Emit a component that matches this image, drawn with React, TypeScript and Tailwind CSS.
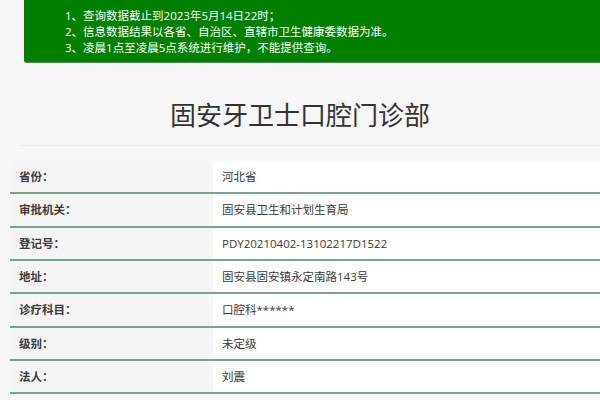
import React from 'react';

const notices = [
  '1、查询数据截止到2023年5月14日22时；',
  '2、信息数据结果以各省、自治区、直辖市卫生健康委数据为准。',
  '3、凌晨1点至凌晨5点系统进行维护，不能提供查询。',
];

const rows = [
  { label: '省份：', value: '河北省' },
  { label: '审批机关：', value: '固安县卫生和计划生育局' },
  { label: '登记号：', value: 'PDY20210402-13102217D1522' },
  { label: '地址：', value: '固安县固安镇永定南路143号' },
  { label: '诊疗科目：', value: '口腔科******' },
  { label: '级别：', value: '未定级' },
  { label: '法人：', value: '刘震' },
];

const App = () => {
  return (
    <div className="w-full h-[400px] overflow-hidden bg-[#f7f7f7] font-['Open_Sans','Noto_Sans_CJK_SC',sans-serif] text-[#333]">
      <div className="ml-[24px] h-[63px] bg-[#008000] rounded-bl-[3px] border-b border-[#3d9b3d] pl-[41px] pt-[8px] text-white text-[11.5px] leading-[16px]">
        {notices.map((n, i) => (
          <p key={i}>{n}</p>
        ))}
      </div>

      <div className="pt-[33px] pb-[13px] ml-[20px] border-b border-[#ececec]">
        <h1 className="text-center text-[26px] leading-[36px] font-normal text-[#333] -ml-[20px] font-['Noto_Sans_CJK_SC',sans-serif]">
          固安牙卫士口腔门诊部
        </h1>
      </div>

      <div className="ml-[10px] mt-[15px]">
        {rows.map((r) => (
          <div
            key={r.label}
            className="grid grid-cols-[203px_1fr] h-[33.33px] border-b-2 border-[#78a48f]"
          >
            <div className="bg-[#f5f5f5] pl-[9px] flex items-center text-[11.5px] font-bold text-[#3a3a3a]">
              {r.label}
            </div>
            <div className="bg-white pl-[9px] flex items-center text-[11.5px] text-[#3a3a3a]">
              {r.value}
            </div>
          </div>
        ))}
      </div>
    </div>
  );
};

export default App;
